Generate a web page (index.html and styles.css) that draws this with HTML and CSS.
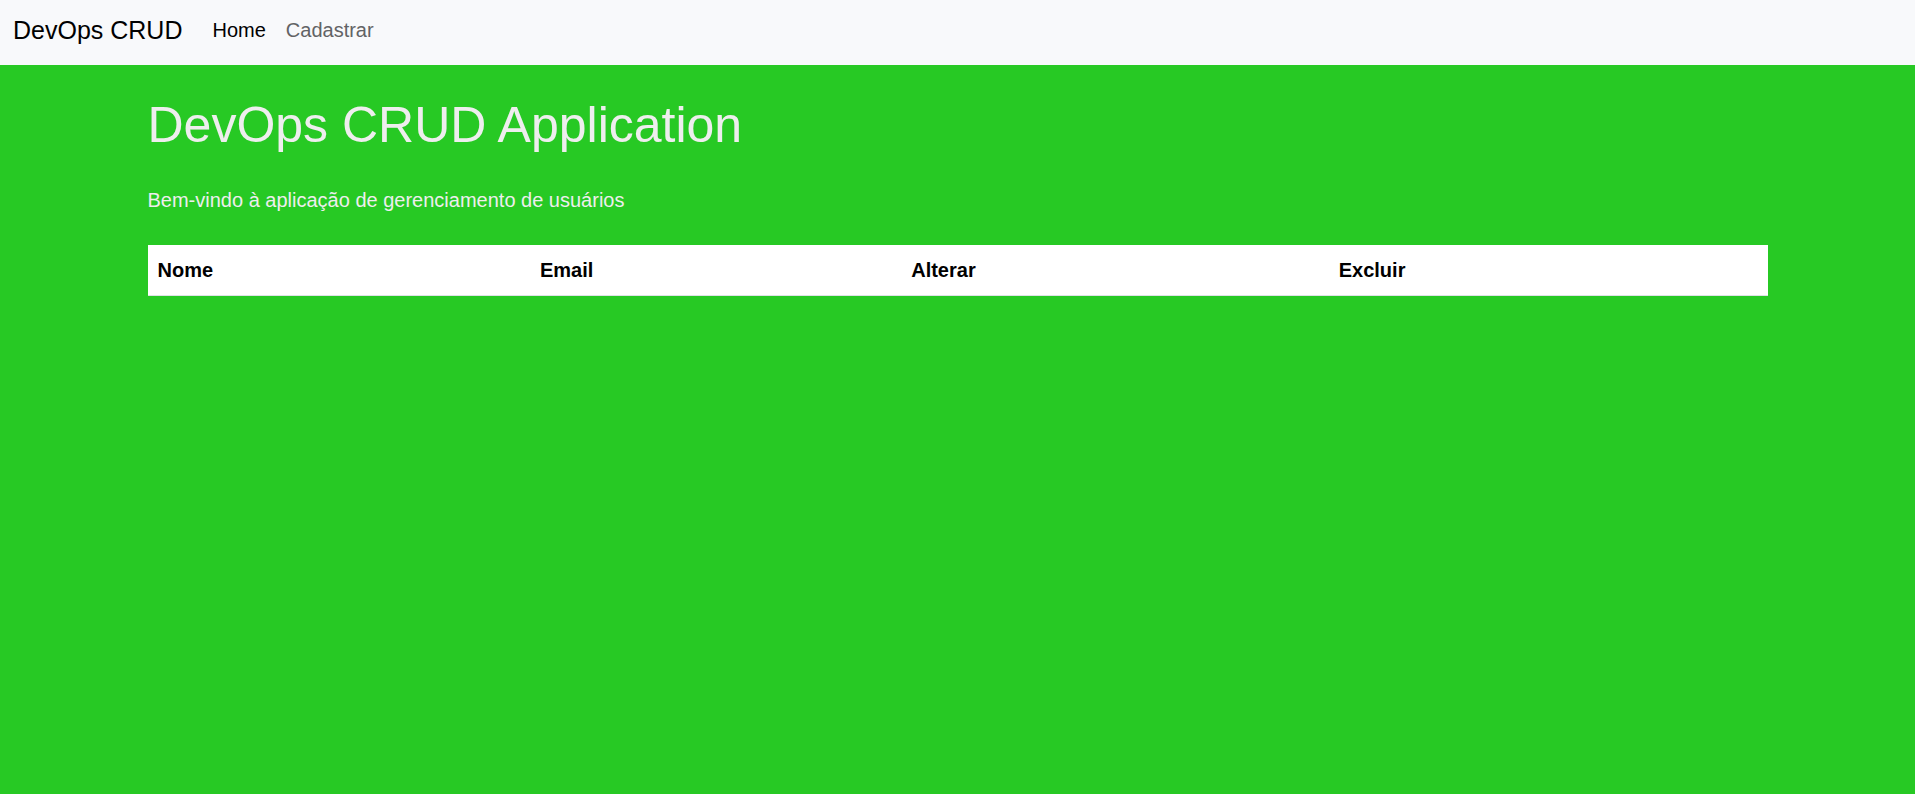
FILE: index.html
```html
<!DOCTYPE html>
<html lang="pt-BR">
<head>
  <meta charset="utf-8">
  <meta name="viewport" content="width=device-width, initial-scale=1">
  <title>DevOps CRUD</title>
  <link rel="stylesheet" href="styles.css">
</head>
<body>
  <nav class="navbar">
    <a class="navbar-brand" href="#">DevOps CRUD</a>
    <ul class="navbar-nav">
      <li><a class="nav-link active" href="#" aria-current="page">Home</a></li>
      <li><a class="nav-link" href="#">Cadastrar</a></li>
    </ul>
  </nav>
  <main class="container">
    <h1 class="title">DevOps CRUD Application</h1>
    <p class="lead">Bem-vindo à aplicação de gerenciamento de usuários</p>
    <table class="table">
      <thead>
        <tr>
          <th scope="col">Nome</th>
          <th scope="col">Email</th>
          <th scope="col">Alterar</th>
          <th scope="col">Excluir</th>
        </tr>
      </thead>
      <tbody></tbody>
    </table>
  </main>
</body>
</html>
```
FILE: styles.css
```css
*,
*::before,
*::after {
  box-sizing: border-box;
}

body {
  margin: 0;
  background-color: #27c924;
  color: #eeeeee;
  font-family: "Liberation Sans", Arial, sans-serif;
  font-size: 20px;
  line-height: 30px;
}

.navbar {
  display: flex;
  align-items: center;
  gap: 10px;
  padding: 5px 13px 10px;
  background-color: #f8f9fb;
}

.navbar-brand {
  margin-right: 10px;
  color: #000000;
  font-size: 25px;
  text-decoration: none;
}

.navbar-nav {
  display: flex;
  margin: 0;
  padding: 0;
  list-style: none;
}

.nav-link {
  display: block;
  padding: 10px;
  color: #626365;
  text-decoration: none;
}

.nav-link.active {
  color: #000000;
}

.container {
  max-width: 1650px;
  margin: 0 auto;
  padding: 30px 15px;
}

.title {
  margin: 0 0 30px;
  font-size: 50px;
  font-weight: 400;
  line-height: 60px;
}

.lead {
  margin: 0 0 30px;
}

.table {
  width: 100%;
  border-collapse: collapse;
  background-color: #ffffff;
  color: #000000;
}

.table th {
  padding: 10px;
  border-bottom: 1px solid #dee2e6;
  text-align: left;
}
```
